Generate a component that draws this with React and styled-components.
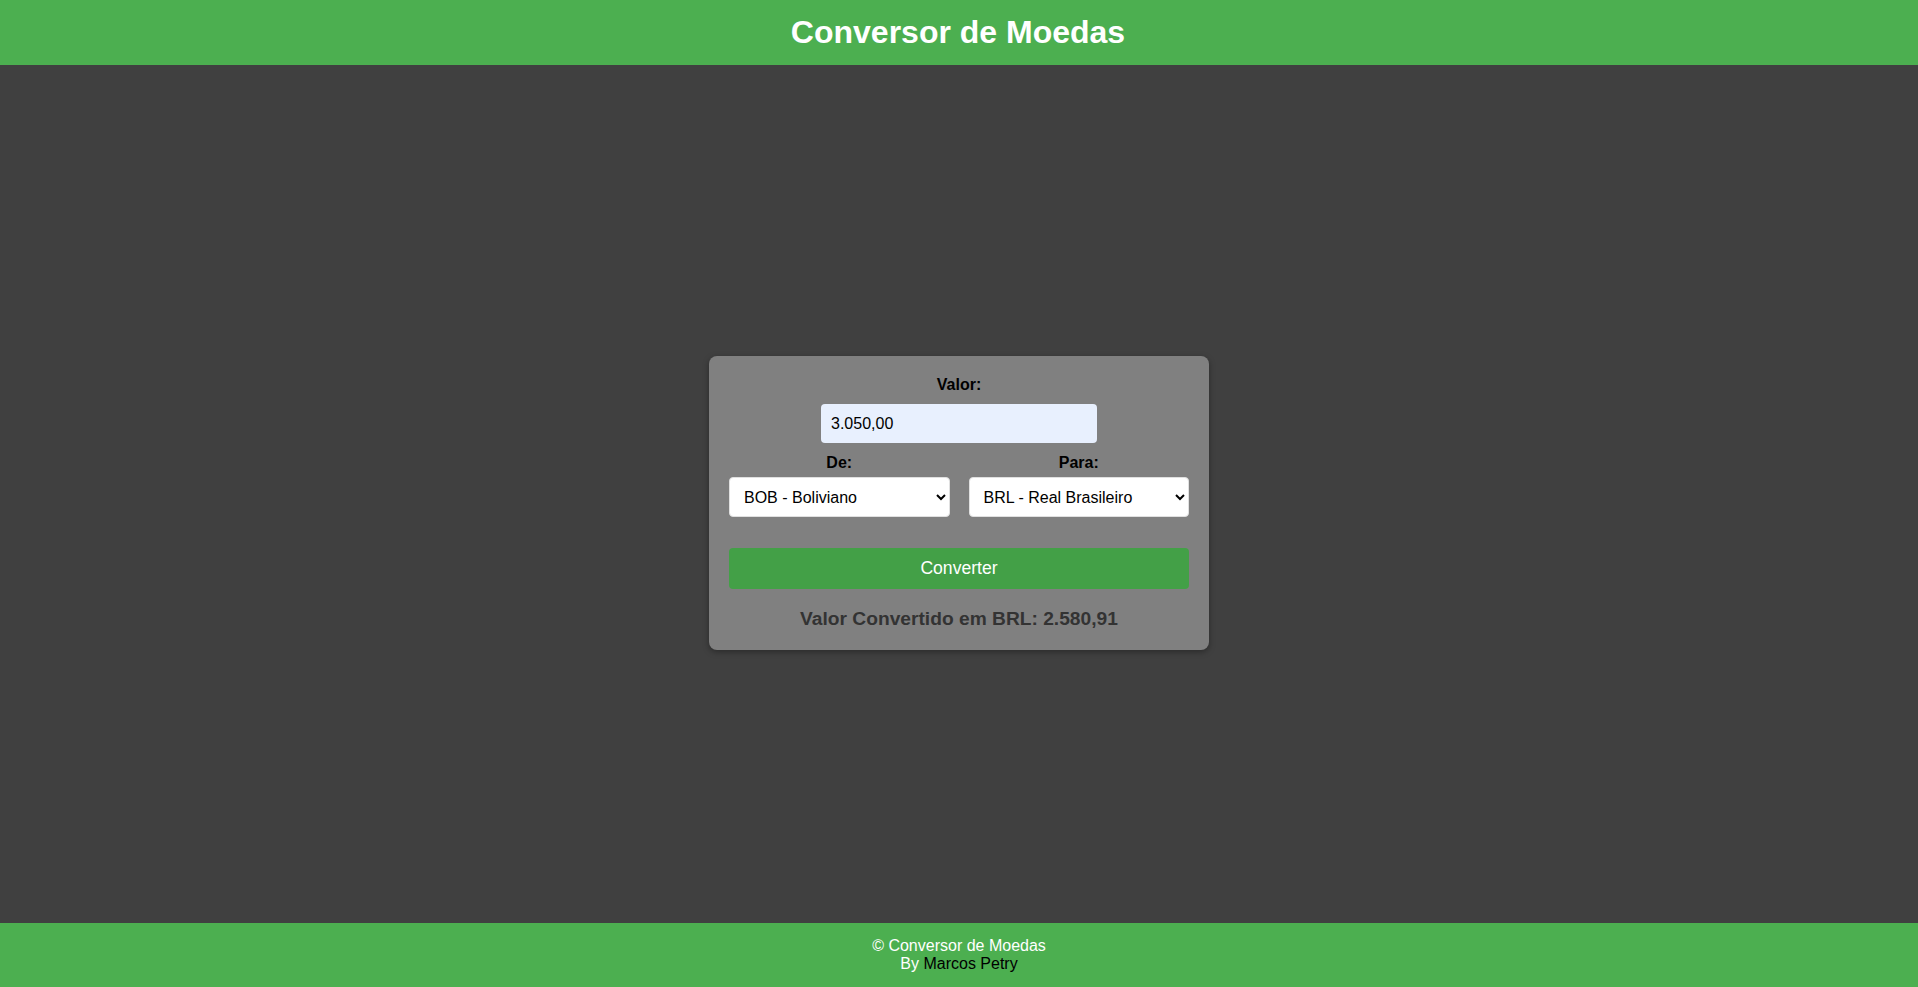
import { useState } from "react";
import styled, { createGlobalStyle } from "styled-components";

const GlobalStyle = createGlobalStyle`
  html, body {
    margin: 0;
    padding: 0;
  }
  body {
    font-family: "Liberation Sans", Arial, sans-serif;
    background-color: #404040;
  }
`;

const Page = styled.div`
  display: flex;
  flex-direction: column;
  min-height: 100vh;
`;

const Header = styled.header`
  height: 65px;
  background-color: #4caf50;
  display: flex;
  align-items: center;
  justify-content: center;
`;

const Title = styled.h1`
  margin: 0;
  color: #fff;
  font-size: 32px;
  font-weight: bold;
  position: relative;
  left: -1px;
`;

const Main = styled.main`
  flex: 1;
  display: flex;
  align-items: center;
  justify-content: center;
  padding-top: 18px;
`;

const Card = styled.div`
  width: 500px;
  box-sizing: border-box;
  padding: 20px;
  background-color: #808080;
  border-radius: 8px;
  box-shadow: 0 2px 6px rgba(0, 0, 0, 0.35);
  display: flex;
  flex-direction: column;
  align-items: center;
`;

const Label = styled.label`
  display: block;
  font-size: 16px;
  font-weight: bold;
  color: #000;
  text-align: center;
  line-height: 18px;
  margin-bottom: ${(p) => p.$gap || 5}px;
`;

const ValueInput = styled.input`
  width: 276px;
  height: 39px;
  box-sizing: border-box;
  padding: 0 10px;
  border: none;
  border-radius: 4px;
  background-color: #e8f0fe;
  font-family: "Liberation Sans", Arial, sans-serif;
  font-size: 16px;
  color: #000;
  outline: none;
`;

const SelectRow = styled.div`
  width: 100%;
  display: grid;
  grid-template-columns: 1fr 1fr;
  column-gap: 19px;
  margin-top: 11px;
`;

const Field = styled.div`
  display: flex;
  flex-direction: column;
`;

const Select = styled.select`
  width: 100%;
  height: 40px;
  box-sizing: border-box;
  padding: 0 10px;
  border: 1px solid #e0e0e0;
  border-radius: 4px;
  background-color: #fff;
  font-family: "Liberation Sans", Arial, sans-serif;
  font-size: 16px;
  color: #000;
`;

const Button = styled.button`
  width: 100%;
  height: 41px;
  margin-top: 31px;
  border: none;
  border-radius: 4px;
  background-color: #43a047;
  color: #fff;
  font-family: "Liberation Sans", Arial, sans-serif;
  font-size: 17.6px;
  cursor: pointer;
`;

const Result = styled.p`
  margin: 19px 0 0;
  font-size: 19.2px;
  font-weight: bold;
  color: #333;
  line-height: 22px;
`;

const Footer = styled.footer`
  height: 64px;
  background-color: #4caf50;
  display: flex;
  flex-direction: column;
  align-items: center;
  justify-content: center;
  color: #fff;
  font-size: 16px;
  line-height: 18px;
`;

const Author = styled.span`
  color: #000;
`;

const currencies = [
  ["BOB", "Boliviano"],
  ["BRL", "Real Brasileiro"],
  ["USD", "Dólar Americano"],
  ["EUR", "Euro"],
];

const App = () => {
  const [valor, setValor] = useState("3.050,00");
  const [de, setDe] = useState("BOB");
  const [para, setPara] = useState("BRL");

  return (
    <Page>
      <GlobalStyle />
      <Header>
        <Title>Conversor de Moedas</Title>
      </Header>

      <Main>
        <Card>
          <Label htmlFor="valor" $gap={10}>
            Valor:
          </Label>
          <ValueInput
            id="valor"
            value={valor}
            onChange={(e) => setValor(e.target.value)}
          />
          <SelectRow>
            <Field>
              <Label htmlFor="de">De:</Label>
              <Select id="de" value={de} onChange={(e) => setDe(e.target.value)}>
                {currencies.map(([code, name]) => (
                  <option key={code} value={code}>
                    {code} - {name}
                  </option>
                ))}
              </Select>
            </Field>
            <Field>
              <Label htmlFor="para">Para:</Label>
              <Select
                id="para"
                value={para}
                onChange={(e) => setPara(e.target.value)}
              >
                {currencies.map(([code, name]) => (
                  <option key={code} value={code}>
                    {code} - {name}
                  </option>
                ))}
              </Select>
            </Field>
          </SelectRow>
          <Button>Converter</Button>
          <Result>Valor Convertido em {para}: 2.580,91</Result>
        </Card>
      </Main>

      <Footer>
        <div>© Conversor de Moedas</div>
        <div>
          By <Author>Marcos Petry</Author>
        </div>
      </Footer>
    </Page>
  );
};

export default App;
